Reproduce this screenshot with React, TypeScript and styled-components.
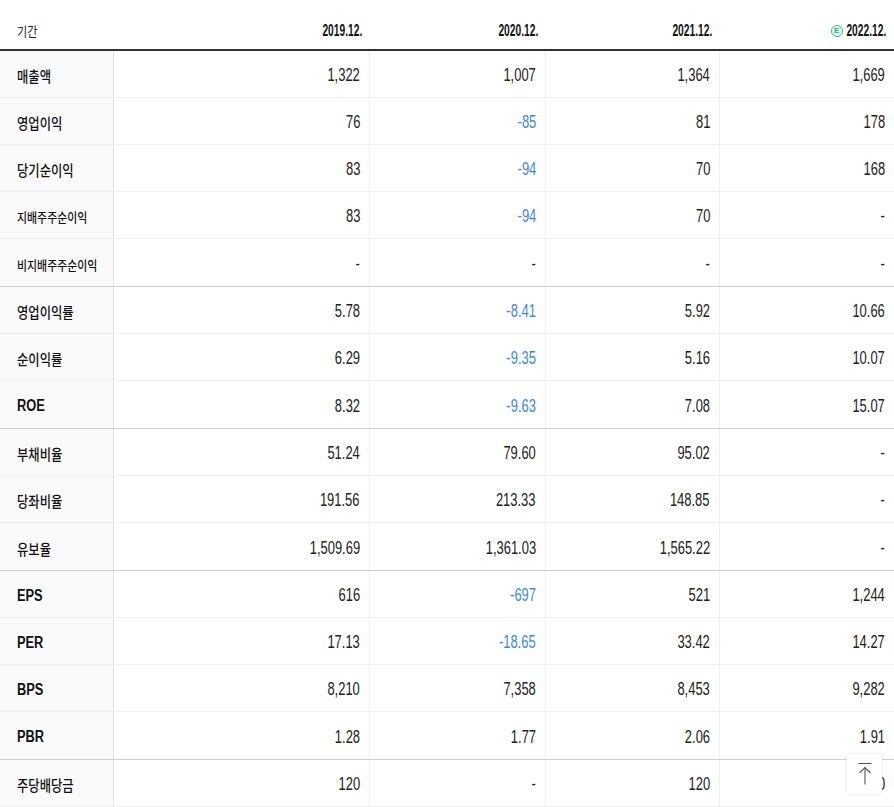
import styled, { createGlobalStyle } from 'styled-components';

const COLS = '114px 256px 176px 174px 1fr';

const GlobalStyle = createGlobalStyle`
  html, body {
    margin: 0;
    padding: 0;
    background: #fff;
  }
  body {
    font-family: "Liberation Sans", "Noto Sans CJK KR", Arial, sans-serif;
    color: #222;
  }
`;

type Row = {
  label: string;
  values: string[];
  kind?: 'small' | 'bold';
  groupEnd?: boolean;
};

const rows: Row[] = [
  { label: '매출액', values: ['1,322', '1,007', '1,364', '1,669'] },
  { label: '영업이익', values: ['76', '-85', '81', '178'] },
  { label: '당기순이익', values: ['83', '-94', '70', '168'] },
  { label: '지배주주순이익', values: ['83', '-94', '70', '-'], kind: 'small' },
  { label: '비지배주주순이익', values: ['-', '-', '-', '-'], kind: 'small', groupEnd: true },
  { label: '영업이익률', values: ['5.78', '-8.41', '5.92', '10.66'] },
  { label: '순이익률', values: ['6.29', '-9.35', '5.16', '10.07'] },
  { label: 'ROE', values: ['8.32', '-9.63', '7.08', '15.07'], kind: 'bold', groupEnd: true },
  { label: '부채비율', values: ['51.24', '79.60', '95.02', '-'] },
  { label: '당좌비율', values: ['191.56', '213.33', '148.85', '-'] },
  { label: '유보율', values: ['1,509.69', '1,361.03', '1,565.22', '-'], groupEnd: true },
  { label: 'EPS', values: ['616', '-697', '521', '1,244'], kind: 'bold' },
  { label: 'PER', values: ['17.13', '-18.65', '33.42', '14.27'], kind: 'bold' },
  { label: 'BPS', values: ['8,210', '7,358', '8,453', '9,282'], kind: 'bold' },
  { label: 'PBR', values: ['1.28', '1.77', '2.06', '1.91'], kind: 'bold', groupEnd: true },
  { label: '주당배당금', values: ['120', '-', '120', '120'] },
];

const periods = ['2019.12.', '2020.12.', '2021.12.', '2022.12.'];

const App = () => {
  return (
    <>
      <GlobalStyle />
      <Table>
        <HeadRow>
          <HeadCell $left>
            <HeadLabel>기간</HeadLabel>
          </HeadCell>
          {periods.map((p, i) => (
            <HeadCell key={p}>
              {i === 3 && <Estimate>E</Estimate>}
              <HeadText>{p}</HeadText>
            </HeadCell>
          ))}
        </HeadRow>
        {rows.map(row => (
          <BodyRow key={row.label} $groupEnd={row.groupEnd}>
            <LabelCell>
              <LabelText $kind={row.kind}>{row.label}</LabelText>
            </LabelCell>
            {row.values.map((v, i) => (
              <ValueCell key={i}>
                <ValueText $negative={v.startsWith('-') && v.length > 1}>{v}</ValueText>
              </ValueCell>
            ))}
          </BodyRow>
        ))}
      </Table>
      <TopButton aria-label="맨 위로">
        <svg width="16" height="24" viewBox="0 0 16 24" fill="none" stroke="#555" strokeWidth="1.1">
          <path d="M1.5 1.5h13" />
          <path d="M8 5.5v17" />
          <path d="M2.5 11l5.5-5.5 5.5 5.5" />
        </svg>
      </TopButton>
    </>
  );
};

const Table = styled.div`
  width: 894px;
`;

const HeadRow = styled.div`
  display: grid;
  grid-template-columns: ${COLS};
  height: 49px;
  border-bottom: 2px solid #333;
`;

const HeadCell = styled.div<{ $left?: boolean }>`
  display: flex;
  align-items: center;
  justify-content: ${p => (p.$left ? 'flex-start' : 'flex-end')};
  gap: 3px;
  padding: 12px ${p => (p.$left ? '0' : '8px')} 0 ${p => (p.$left ? '17px' : '0')};
`;

const HeadLabel = styled.span`
  display: inline-block;
  font-family: "Noto Sans CJK KR", sans-serif;
  font-size: 13px;
  color: #222;
  transform: scaleX(0.85);
  transform-origin: left center;
`;

const HeadText = styled.span`
  display: inline-block;
  font-size: 16px;
  font-weight: bold;
  color: #111;
  transform: scaleX(0.64);
  transform-origin: right center;
`;

const Estimate = styled.span`
  display: inline-flex;
  align-items: center;
  justify-content: center;
  flex: none;
  width: 10px;
  height: 10px;
  border: 1px solid #2cbf8e;
  border-radius: 50%;
  background: #e9f9f2;
  color: #1fae7c;
  font-size: 8px;
  font-weight: bold;
  line-height: 1;
  margin-right: -22px;
`;

const BodyRow = styled.div<{ $groupEnd?: boolean }>`
  display: grid;
  grid-template-columns: ${COLS};
  height: ${p => (p.$groupEnd ? 48 : 47)}px;
  box-sizing: border-box;
  border-bottom: 1px solid ${p => (p.$groupEnd ? '#cfcfcf' : '#efefef')};
`;

const LabelCell = styled.div`
  display: flex;
  align-items: center;
  padding: 3px 0 0 17px;
  background: #fafafa;
  border-right: 1px solid #e2e2e2;
`;

const LabelText = styled.span<{ $kind?: 'small' | 'bold' }>`
  display: inline-block;
  white-space: nowrap;
  font-family: ${p =>
    p.$kind === 'bold' ? '"Liberation Sans", sans-serif' : '"Noto Sans CJK KR", sans-serif'};
  font-size: ${p => (p.$kind === 'small' ? '13px' : p.$kind === 'bold' ? '16px' : '15px')};
  font-weight: ${p => (p.$kind === 'bold' ? 'bold' : 500)};
  color: #111;
  transform: scaleX(${p => (p.$kind === 'bold' ? 0.8 : p.$kind === 'small' ? 0.84 : 0.82)});
  transform-origin: left center;
`;

const ValueCell = styled.div`
  display: flex;
  align-items: center;
  justify-content: flex-end;
  padding: 3px 9px 0 0;
  border-right: 1px solid #efefef;

  &:last-child {
    border-right: none;
  }
`;

const ValueText = styled.span<{ $negative?: boolean }>`
  display: inline-block;
  white-space: nowrap;
  font-size: 17.5px;
  color: ${p => (p.$negative ? '#3a88e4' : '#222')};
  transform: scaleX(0.74);
  transform-origin: right center;
`;

const TopButton = styled.button`
  position: fixed;
  right: 12px;
  bottom: 13px;
  width: 35px;
  height: 40px;
  display: flex;
  align-items: center;
  justify-content: center;
  padding: 0;
  border: none;
  background: #fff;
  box-shadow: 0 0 3px rgba(0, 0, 0, 0.12);
  cursor: pointer;
`;

export default App;
